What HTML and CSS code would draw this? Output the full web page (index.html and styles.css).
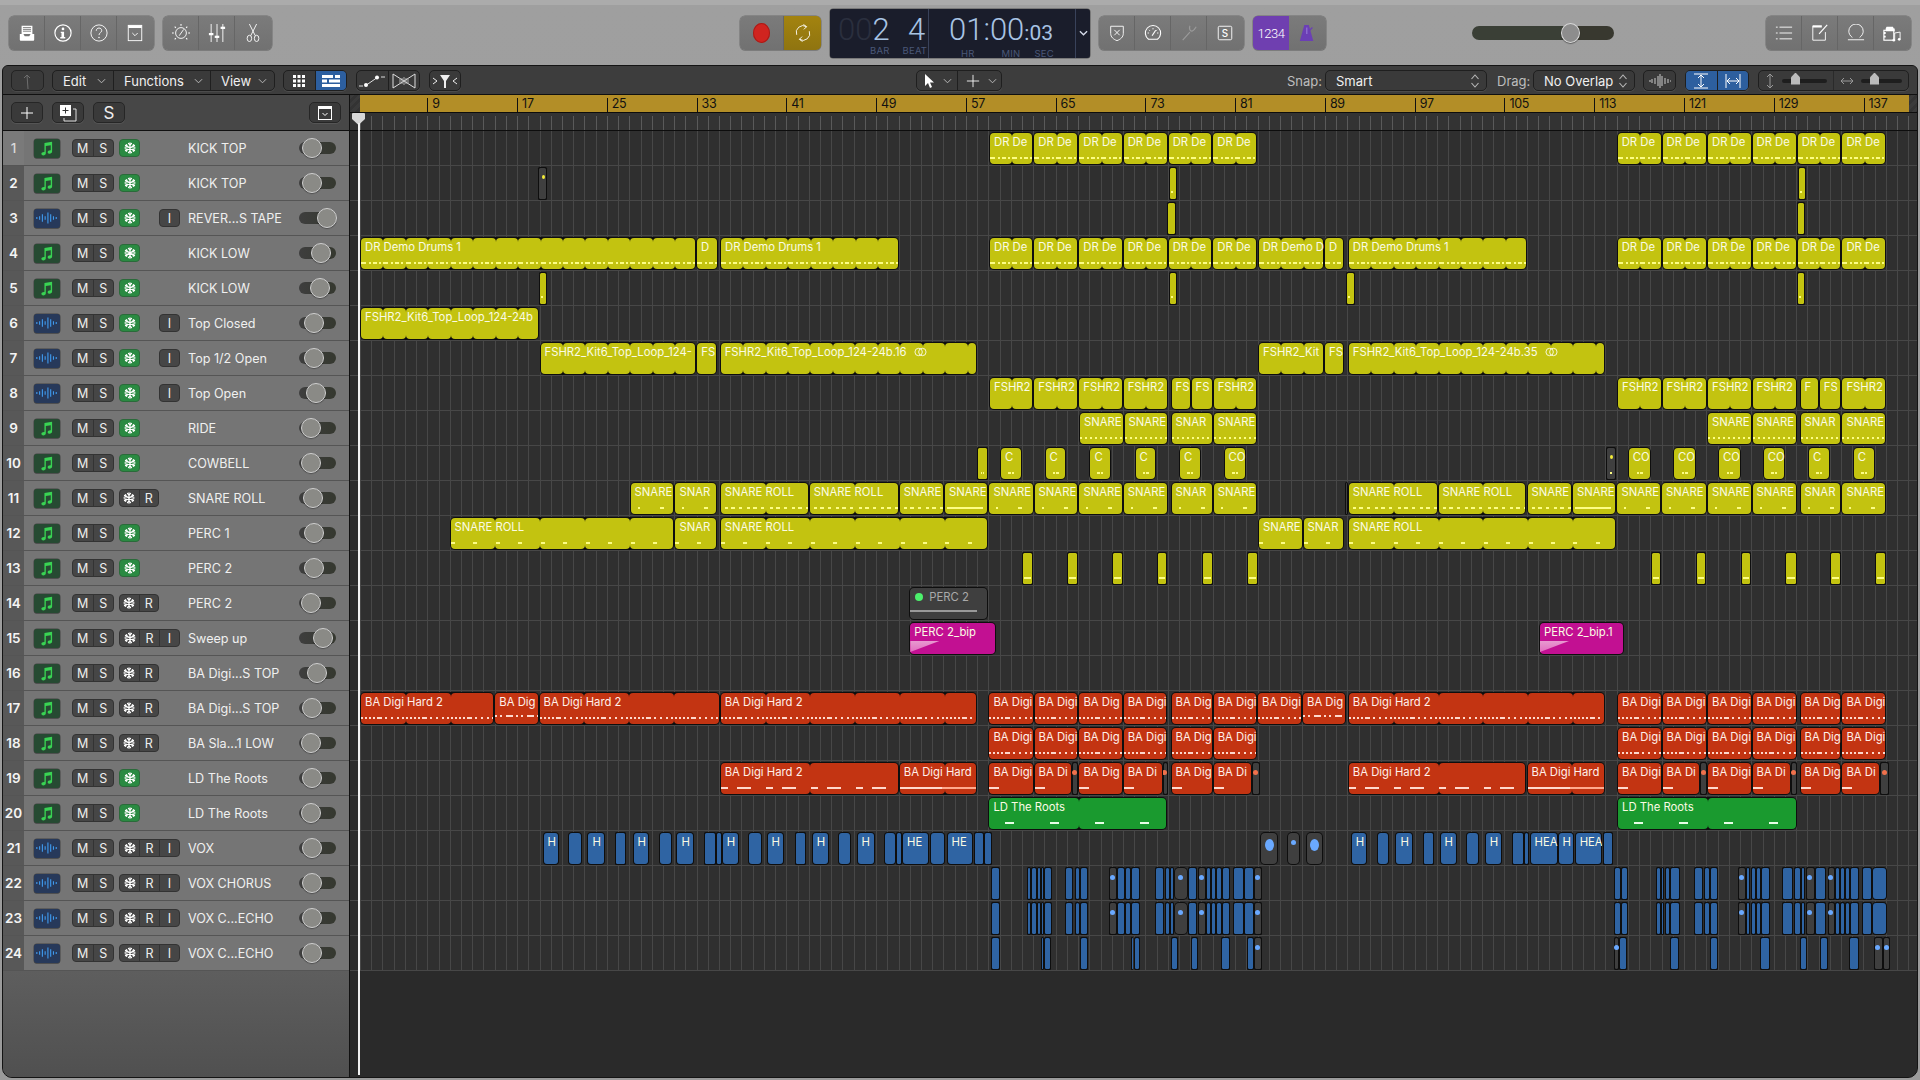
FILE: index.html
```html
<!DOCTYPE html>
<html lang="en">
<head>
<meta charset="utf-8">
<title>Logic Pro – Tracks</title>
<link rel="stylesheet" href="styles.css">
</head>
<body>
<svg class="sprite" aria-hidden="true">
  <symbol id="i-snow" viewBox="0 0 16 16"><g stroke="#fff" stroke-width="1.6" fill="none" stroke-linecap="round"><path d="M8 1v14M2 4.5l12 7M14 4.5l-12 7"/><path d="M6 2l2 2 2-2M6 14l2-2 2 2M1.5 7l2.7-.7-.7-2.7M14.500 7l-2.700-.7.7-2.700M1.500 9l2.700.7-.7 2.700M14.500 9l-2.700.7.7 2.700"/></g></symbol>
  <symbol id="i-note" viewBox="0 0 20 20"><path fill="#39d353" d="M7 3.500l9-1.500v11.500c0 1.500-1.400 2.600-3 2.600-1.300 0-2.200-.7-2.200-1.800 0-1.300 1.400-2.200 3-2.200l.6.100V6.200l-5.800 1v8.300c0 1.500-1.400 2.600-3 2.600-1.300 0-2.200-.7-2.200-1.800 0-1.300 1.400-2.200 3-2.200l.6.100z"/></symbol>
  <symbol id="i-wave" viewBox="0 0 26 14"><g stroke="#3f9bf0" stroke-width="1.200"><path d="M2 6v2M5 5v4M8 3v8M11 5v4M14 1v12M17 3v8M20 5v4M23 6v2"/></g></symbol>
  <symbol id="i-chev" viewBox="0 0 10 6"><path d="M1 1l4 4 4-4" fill="none" stroke="#b8b8b8" stroke-width="1.100"/></symbol>
  <symbol id="i-updn" viewBox="0 0 10 16"><path d="M1.500 6L5 2l3.500 4M1.500 10L5 14l3.500-4" fill="none" stroke="#b8b8b8" stroke-width="1.100"/></symbol>
</svg>

<header class="topbar">
  <div class="group g-a">
    <span class="cell"><svg class="ti" viewBox="0 0 20 20"><path fill="#fff" d="M4 2h12v9H4z"/><path stroke="#777" d="M5.500 4h9M5.500 6h9M5.500 8h9"/><path fill="#fff" d="M2 11h4l1.500 2.500h5L14 11h4v6.500a1 1 0 0 1-1 1H3a1 1 0 0 1-1-1z"/></svg></span>
    <span class="cell"><svg class="ti" viewBox="0 0 20 20"><circle cx="10" cy="10" r="9" fill="none" stroke="#fff" stroke-width="1.300"/><circle cx="10" cy="5.500" r="1.500" fill="#fff"/><path fill="#fff" d="M7.500 8.500h3.700v6h1.300V16h-5.500v-1.500h1.300v-4.500H7.500z"/></svg></span>
    <span class="cell"><svg class="ti" viewBox="0 0 20 20"><circle cx="10" cy="10" r="9" fill="none" stroke="#fff" stroke-width="1"/><path d="M7 7.500c0-1.800 1.300-3 3-3s3 1.200 3 2.800c0 2.400-3 2.400-3 5" fill="none" stroke="#fff"/><circle cx="10" cy="15" r=".8" fill="#fff"/></svg></span>
    <span class="cell"><svg class="ti" viewBox="0 0 20 20"><rect x="2.500" y="1.500" width="15" height="17" fill="none" stroke="#fff"/><path fill="#fff" d="M2.500 1.500h15v3h-15z"/><path d="M7 10l3 3 3-3" fill="none" stroke="#fff"/></svg></span>
  </div>
  <div class="group g-b">
    <span class="cell"><svg class="ti" viewBox="0 0 20 20"><circle cx="10" cy="10" r="6" fill="none" stroke="#fff"/><path d="M8 13l5-7" stroke="#fff"/><g stroke="#fff" stroke-width="1.200"><path d="M10 0v2M3 3l1.300 1.300M17 3l-1.300 1.300M0 10h2M18 10h2M3 17l1.300-1.300M17 17l-1.300-1.300"/></g></svg></span>
    <span class="cell"><svg class="ti" viewBox="0 0 20 20"><g stroke="#fff" fill="none"><path d="M3.500 0v20M10 0v20M16.500 0v20"/></g><g fill="#fff"><rect x="1" y="10" width="5" height="2.500"/><rect x="7.500" y="13" width="5" height="2.500"/><rect x="14" y="3" width="5" height="2.500"/></g></svg></span>
    <span class="cell"><svg class="ti" viewBox="0 0 20 20"><g stroke="#fff" fill="none"><path d="M6 0l6.500 13M14 0L7.500 13"/><ellipse cx="6" cy="16" rx="2.500" ry="3.500"/><ellipse cx="14" cy="16" rx="2.500" ry="3.500"/></g></svg></span>
  </div>
  <div class="group g-c">
    <span class="cell cell-rec"><i class="rec"></i></span>
    <span class="cell cell-cyc"><svg class="ti" viewBox="0 0 20 20"><g fill="none" stroke="#fff"><path d="M3 12a7.500 7.500 0 0 1 11-9"/><path d="M17 8a7.500 7.500 0 0 1-11 9"/><path d="M10.500 .5l3.500 2.500-3 3M9.500 19.500L6 17l3-3"/></g></svg></span>
  </div>
  <div class="lcd">
    <div class="lcd-pos">
      <div class="field f-bar"><div class="big"><span class="dim">00</span>2</div><span class="cap">BAR</span></div>
      <div class="field f-beat"><div class="big">4</div><span class="cap">BEAT</span></div>
    </div>
    <div class="lcd-time">
      <div class="big">01:00<small>:03</small></div>
      <div class="caps"><span class="cap">HR</span><span class="cap cap-min">MIN</span><span class="cap cap-sec">SEC</span></div>
    </div>
    <div class="lcd-more"><svg viewBox="0 0 10 6"><path d="M1 1l4 4 4-4" fill="none" stroke="#d6dcea" stroke-width="1.500"/></svg></div>
  </div>
  <div class="group g-d">
    <span class="cell"><svg class="ti" viewBox="0 0 20 20"><path d="M3 2.500h14v8c0 4-3 6.500-7 8-4-1.500-7-4-7-8z" fill="none" stroke="#fff"/><path d="M7 6.500l6 6M13 6.500l-6 6" stroke="#fff"/></svg></span>
    <span class="cell"><svg class="ti" viewBox="0 0 20 20"><path d="M5 17h10a8.500 8.500 0 1 0-10 0z" fill="none" stroke="#fff" stroke-width="1.200"/><path d="M9 13l4-6" stroke="#fff" stroke-width="1.300"/><g stroke="#fff"><path d="M4 10h1.500M5.500 6.500l1 1M10 4.500v1.500M14.500 6.500l-1 1M16 10h-1.500"/></g></svg></span>
    <span class="cell"><svg class="ti" viewBox="0 0 20 20"><g fill="none" stroke="#9a9a9a" stroke-width="1.300"><path d="M11 2c-1 3 0 6 2 6s3-2 5-5M11 9l-8 9"/></g></svg></span>
    <span class="cell"><svg class="ti" viewBox="0 0 20 20"><rect x="2.500" y="2.500" width="15" height="15" rx="1.500" fill="none" stroke="#fff"/><text x="10" y="14" class="svgt">S</text></svg></span>
  </div>
  <div class="group g-e">
    <span class="cell cell-count">1234</span>
    <span class="cell"><svg class="ti" viewBox="0 0 20 20"><path fill="#6b3fb5" d="M7 1h5l5 18H2z"/><path d="M8 12l8-8" stroke="#6b3fb5" stroke-width="1.500"/><path d="M9 4h1.500v7H9z" fill="#8f6fd0"/></svg></span>
  </div>
  <div class="volume"><i class="vol-knob"></i></div>
  <div class="group g-f">
    <span class="cell"><svg class="ti" viewBox="0 0 20 20"><g stroke="#fff"><path d="M5 3.500h14M5 10h14M5 16.500h14"/><path d="M1 3.500h2M1 10h2M1 16.500h2"/></g></svg></span>
    <span class="cell"><svg class="ti" viewBox="0 0 20 20"><path d="M16 9v9H2V2h10" fill="none" stroke="#fff"/><path fill="#fff" d="M2 2h10v2H2z"/><path d="M9 11L18 1" stroke="#fff" stroke-width="1.300"/></svg></span>
    <span class="cell"><svg class="ti" viewBox="0 0 20 20"><path d="M6 15C3 13 2 10 2 8a8 8 0 0 1 16 0c0 2-1 5-4 7" fill="none" stroke="#fff"/><path d="M1 17.500h18" stroke="#fff"/></svg></span>
    <span class="cell"><svg class="ti" viewBox="0 0 20 20"><rect x="1" y="7" width="11" height="11" fill="none" stroke="#fff" stroke-width="1.300"/><path fill="#fff" d="M4 3h7l1 2h1v3H3V5zM1 9h2v2H1zM1 13h2v2H1z"/><path d="M13 18V10l6-1v8" fill="none" stroke="#fff"/><circle cx="12" cy="18" r="1.500" fill="#fff"/><circle cx="18" cy="17" r="1.500" fill="#fff"/></svg></span>
  </div>
</header>

<main class="window">
  <nav class="tools">
    <button class="tb t-back"><svg viewBox="0 0 14 18" width="14" height="18"><path d="M7 17C7 12 6 8 6 3M3 6l3-3 3 3" fill="none" stroke="#777" stroke-width="1"/></svg></button>
    <div class="tb t-menu">
      <span class="mi mi-edit">Edit<svg class="chev"><use href="#i-chev"/></svg></span>
      <span class="mi mi-func">Functions<svg class="chev"><use href="#i-chev"/></svg></span>
      <span class="mi mi-view">View<svg class="chev"><use href="#i-chev"/></svg></span>
    </div>
    <div class="tb t-vw">
      <span class="tc"><svg viewBox="0 0 14 14" width="14" height="14"><g fill="#fff"><rect x="1" y="1" width="3" height="3"/><rect x="5.500" y="1" width="3" height="3"/><rect x="10" y="1" width="3" height="3"/><rect x="1" y="5.500" width="3" height="3"/><rect x="5.500" y="5.500" width="3" height="3"/><rect x="10" y="5.500" width="3" height="3"/><rect x="1" y="10" width="3" height="3"/><rect x="5.500" y="10" width="3" height="3"/><rect x="10" y="10" width="3" height="3"/></g></svg></span>
      <span class="tc tc-on"><svg viewBox="0 0 18 14" width="18" height="14"><g fill="#fff"><rect y="1" width="11" height="3"/><rect x="13" y="1" width="5" height="3"/><rect y="5.500" width="5" height="3"/><rect x="7" y="5.500" width="11" height="3"/><rect y="10" width="18" height="3"/></g></svg></span>
    </div>
    <div class="tb t-auto">
      <span class="tc"><svg viewBox="0 0 28 14" width="28" height="14"><path d="M1 12h4M23 3h4M7 12L20 3" stroke="#ddd" fill="none"/><circle cx="8" cy="11" r="2" fill="#fff"/><circle cx="19" cy="3.500" r="2" fill="#fff"/></svg></span>
      <span class="tc"><svg viewBox="0 0 24 16" width="24" height="16"><path d="M1 1v14M23 1v14M1 1l22 14M23 1L1 15" stroke="#ddd" fill="none"/><path d="M8 6v4M10 5v6M12 4v8M14 5v6M16 6v4" stroke="#ccc" stroke-width=".8"/></svg></span>
    </div>
    <button class="tb t-catch"><svg viewBox="0 0 26 16" width="26" height="16"><path d="M1 5l4 3-4 3M25 5l-4 3 4 3" stroke="#eee" fill="none"/><path fill="#eee" d="M8 2h10l-4 6v7h-2V8z"/></svg></button>
    <div class="tb t-tool">
      <span class="tc tool1"><svg viewBox="0 0 12 16" width="12" height="16"><path fill="#fff" d="M2 1v12l3-3 2 5 2-1-2-4.500h4z"/></svg><svg class="chev"><use href="#i-chev"/></svg></span>
      <span class="tc tool2"><svg viewBox="0 0 16 16" width="14" height="14"><path d="M8 1v14M1 8h14" stroke="#fff"/></svg><svg class="chev"><use href="#i-chev"/></svg></span>
    </div>
    <span class="tl t-snapl">Snap:</span>
    <div class="tb sel t-snap">Smart<svg class="updn"><use href="#i-updn"/></svg></div>
    <span class="tl t-dragl">Drag:</span>
    <div class="tb sel t-drag">No Overlap<svg class="updn"><use href="#i-updn"/></svg></div>
    <button class="tb t-wave"><svg viewBox="0 0 24 14" width="24" height="14"><path d="M1 7h2M4 5v4M7 4v6M10 2v10M12 0v14M14 2v10M17 4v6M20 5v4M22 7h1" stroke="#ccc"/></svg></button>
    <div class="tb t-fit">
      <span class="tc tc-on"><svg viewBox="0 0 16 16" width="16" height="16"><path d="M1 1h14M1 15h14M8 2v12M5 5l3-3 3 3M5 11l3 3 3-3" stroke="#fff" fill="none"/></svg></span>
      <span class="tc tc-on"><svg viewBox="0 0 16 16" width="16" height="16"><path d="M1 1v14M15 1v14M2 8h12M5 5L2 8l3 3M11 5l3 3-3 3" stroke="#fff" fill="none"/></svg></span>
    </div>
    <div class="tb t-zoom">
      <span class="zm"><svg viewBox="0 0 10 18" width="10" height="18"><path d="M5 2v14M2 5l3-3 3 3M2 13l3 3 3-3" stroke="#999" fill="none"/></svg><span class="zs"><i class="zt" ></i></span></span>
      <span class="zm"><svg viewBox="0 0 14 10" width="14" height="10"><path d="M1 5h12M4 2L1 5l3 3M10 2l3 3-3 3" stroke="#999" fill="none"/></svg><span class="zs"><i class="zt"></i></span></span>
    </div>
  </nav>

  <div class="body">
    <aside class="list">
      <div class="list-head">
        <button class="hb"><svg viewBox="0 0 14 14" width="14" height="14"><path d="M7 1v12M1 7h12" stroke="#fff"/></svg></button>
        <button class="hb"><svg viewBox="0 0 18 18" width="18" height="18"><path fill="#fff" d="M1 1h11v11H1z"/><path d="M6.500 3.500v6M3.500 6.500h6" stroke="#333"/><path d="M14 5h3v12H5v-3" stroke="#ddd" fill="none"/></svg></button>
        <button class="hb hb-s">S</button>
        <button class="hb hb-end"><svg viewBox="0 0 16 16" width="16" height="16"><rect x="1.500" y="1.500" width="13" height="13" fill="none" stroke="#fff"/><path fill="#fff" d="M1.500 1.500h13v2.500h-13z"/><path d="M5.500 8l2.500 2.500L10.500 8" fill="none" stroke="#fff"/></svg></button>
      </div>
      <div id="tracks"></div>
      <div class="list-rest"></div>
    </aside>
    <section class="arrange">
      <div class="ruler"><div class="ruler-gold" id="ruler"></div></div>
      <div class="subruler"></div>
      <div id="lanes"></div>
      <div class="playhead"><svg viewBox="0 0 13 12" width="13" height="12"><path fill="#d8d8d8" d="M0 1a1 1 0 0 1 1-1h11a1 1 0 0 1 1 1v5l-6.500 6L0 6z"/></svg></div>
    </section>
  </div>
</main>
<script src="app.js"></script>
</body>
</html>
```
FILE: styles.css
```css
* { box-sizing: border-box; }
html, body { margin: 0; height: 1080px; width: 1920px; overflow: hidden; }
body { background: linear-gradient(#ababab 0 5px, #9f9f9f 5px, #9b9b9b); font-family: Inter, "Liberation Sans", sans-serif; color: #eee; }
.sprite { display: none; }
button { font: inherit; color: inherit; padding: 0; margin: 0; }

/* top bar */
.topbar { height: 65px; display: flex; align-items: center; padding: 1px 0 0 9px; }
.group { display: flex; height: 34px; border-radius: 5px; background: linear-gradient(#7b7b7b, #717171); box-shadow: 0 0 0 .5px #6c6c6c, 0 1px 0 #8c8c8c; overflow: hidden; }
.cell { width: 36px; display: grid; place-items: center; border-right: 1px solid #666; }
.cell:last-child { border-right: 0; }
.ti { width: 18px; height: 18px; }
.g-a { width: 145px; }
.g-b { width: 109px; margin-left: 9px; }
.g-c { width: 81px; margin-left: 468px; }
.g-d { width: 145px; margin-left: 9px; }
.g-e { width: 73px; margin-left: 9px; }
.g-f { width: 145px; margin-left: 152px; }
.cell-rec { width: 44px; }
.rec { width: 17px; height: 20px; border-radius: 50%; background: #d0241f; box-shadow: inset 0 0 0 1px #a81c18; }
.cell-cyc { width: 37px; background: linear-gradient(#a3830f, #8f7410); border: 0; }
.cell-count { background: #6f3fb0; font-size: 13px; font-family: Roboto, sans-serif; font-weight: 300; letter-spacing: -.5px; border: 0; color: #fff; }
.lcd { width: 260px; height: 49px; margin-left: 9px; border-radius: 3px; background: #1a1d2b; display: flex; color: #a8c4e4; font-family: Roboto, sans-serif; font-weight: 300; box-shadow: 0 0 0 .5px #555; }
.big { font-size: 31px; line-height: 30px; }
.big small { font-size: 21px; font-weight: 400; }
.dim { color: #2a2f3e; }
.cap { font: 400 9.500px/12px Inter, sans-serif; color: #4a5878; letter-spacing: .2px; }
.lcd-pos { width: 99px; padding: 6.500px 0 0 8px; display: flex; gap: 13px; border-right: 1px solid #39425a; }
.field { display: flex; flex-direction: column; align-items: flex-end; }
.f-beat .cap { margin-right: -2px; }
.lcd-time { width: 147px; padding: 6.500px 0 0 20px; border-right: 1px solid #39425a; }
.caps { display: flex; padding-left: 12px; }
.cap-min { margin-left: 27px; }
.cap-sec { margin-left: 14px; }
.lcd-more { flex: 1; display: grid; place-items: center; }
.lcd-more svg { width: 9px; height: 6px; }
.volume { width: 142px; height: 14px; margin-left: 146px; border-radius: 7px; background: linear-gradient(90deg, #3a3f36 0 70%, #38382f 70%); position: relative; }
.vol-knob { position: absolute; top: -3px; left: 89px; width: 19px; height: 20px; border-radius: 50%; background: #8d8d8d; border: 1.500px solid #d8d8d8; box-shadow: 0 1px 1px #0006; }

/* window */
.window { margin: 0 2px; height: 1013px; background: #2a2a2a; border: 1px solid #141414; border-radius: 6px 6px 10px 10px; overflow: hidden; display: flex; flex-direction: column; }
.tools { height: 29px; flex: none; background: #3d3d3d; border-bottom: 1px solid #101010; display: flex; align-items: center; padding-top: 1px; font-size: 13px; color: #f0f0f0; }
.tb { height: 21px; display: flex; align-items: stretch; background: #3a3a3a; border: 1px solid #1f1f1f; border-radius: 5px; box-shadow: 0 1px 0 #4c4c4c; overflow: hidden; }
button.tb { align-items: center; justify-content: center; }
.tc { display: flex; align-items: center; justify-content: center; flex: 1; }
.tc + .tc { border-left: 1px solid #1f1f1f; }
.tc-on { background: #2d5f9f; }
.chev { width: 9px; height: 6px; }
.t-back { width: 33px; margin-left: 8px; opacity: .85; }
.t-menu { width: 223px; margin-left: 8px; }
.mi { display: flex; align-items: center; justify-content: space-between; padding: 0 7px 0 10px; }
.mi + .mi { border-left: 1px solid #1f1f1f; }
.mi-edit { width: 60px; }
.mi-func { width: 97px; }
.mi-view { flex: 1; }
.t-vw { width: 64px; margin-left: 8px; }
.t-auto { width: 64px; margin-left: 9px; }
.t-catch { width: 32px; margin-left: 9px; }
.t-tool { width: 86px; margin-left: 455px; }
.tool1 { gap: 8px; }
.tool2 { gap: 8px; padding-left: 3px; }
.tl { color: #bdbdbd; }
.t-snapl { margin-left: 285px; width: 38px; }
.sel { align-items: center; justify-content: space-between; padding: 0 6px 0 10px; }
.updn { width: 10px; height: 16px; }
.t-snap { width: 162px; }
.t-dragl { width: 36px; margin-left: 10px; }
.t-drag { width: 102px; }
.t-wave { width: 33px; margin-left: 8px; }
.t-fit { width: 64px; margin-left: 9px; }
.t-zoom { flex: 1; margin: 0 8px 0 9px; }
.zm { flex: 1; display: flex; align-items: center; gap: 7px; padding: 0 6px; }
.zm + .zm { border-left: 1px solid #2a2a2a; }
.zs { flex: 1; height: 4px; background: #1e1e1e; border-radius: 2px; position: relative; }
.zt { position: absolute; left: 9px; top: -6px; width: 9px; height: 12px; background: #bbb; clip-path: polygon(50% 0, 100% 40%, 100% 100%, 0 100%, 0 40%); }

.body { flex: 1; display: flex; min-height: 0; }
.list { width: 347px; flex: none; display: flex; flex-direction: column; border-right: 1px solid #111; background: #555; }
.list-head { height: 36px; flex: none; background: #474747; border-bottom: 1px solid #101010; display: flex; align-items: center; padding: 0 8px 0 8px; gap: 9px; }
.hb { width: 32px; height: 21px; display: grid; place-items: center; background: #3a3a3a; border: 1px solid #262626; border-radius: 5px; box-shadow: 0 1px 0 #555; }
.hb-s { font-size: 17px; }
.hb-end { margin-left: auto; }

.row { height: 35px; display: flex; align-items: center; background: #757575; border-bottom: 1px solid #555; }
.num { width: 21px; height: 100%; display: grid; place-items: center; background: #585858; font-size: 13.500px; font-weight: 600; color: #f4f4f4; flex: none; }
.row.sel-row .num { background: #7a7a7a; color: #d8d8d8; font-weight: 500; }
.kind { width: 26px; height: 19px; margin-left: 10px; border-radius: 3px; display: grid; place-items: center; flex: none; box-shadow: 0 0 0 .5px #444, 0 1px 0 #5a5a5a; }
.kind-m { background: #264a32; }
.kind-a { background: #27395a; }
.kind svg { width: 20px; height: 17px; }
.kind-a svg { width: 24px; height: 14px; }
.btns { display: flex; height: 18px; background: #464646; border: 1px solid #333; border-radius: 4px; font-size: 12.500px; color: #eee; overflow: hidden; }
.btns span { display: grid; place-items: center; flex: 1; }
.btns span + span { border-left: 1px solid #333; }
.ms { width: 42px; margin-left: 12px; flex: none; }
.slot { width: 61px; margin-left: 5px; flex: none; display: flex; justify-content: space-between; }
.fr { width: 40px; }
.fri { width: 61px; }
.green { width: 21px; background: #2a8a42; border-color: #2b6a3a; }
.solo-i { width: 21px; }
.btns svg { width: 12px; height: 12px; }
.name { width: 110px; margin-left: 8px; font-size: 12.600px; color: #f0f0f0; white-space: nowrap; flex: none; }
.toggle { width: 37px; height: 12px; margin-left: 1px; border-radius: 6px; background: linear-gradient(90deg, #3e3e3e, #35382f); position: relative; flex: none; }
.knob { position: absolute; top: -4px; width: 20px; height: 20px; border-radius: 50%; background: #8a8a86; border: 1.500px solid #cfcfcf; box-shadow: 0 1px 1px #0005; }
.list-rest { flex: 1; background: linear-gradient(#5e5e5e, #505050); }

/* arrange */
.arrange { flex: 1; position: relative; background: #2a2a2a; min-width: 0; }
.ruler { height: 18px; border-bottom: 1px solid #0d0d0d; background: repeating-linear-gradient(135deg, #3a3a3a 0 3px, #333 3px 6px); }
.ruler-gold { height: 17px; margin: 0 8px 0 10px; background: #b38e27; position: relative; }
.bar { position: absolute; top: 3px; height: 14px; padding-left: 4px; border-left: 1px solid #111; font: 400 12.500px/12px Inter, sans-serif; color: #111; letter-spacing: -.3px; }
.subruler { height: 18px; border-bottom: 1px solid #0d0d0d; background: linear-gradient(#333 0 3px, transparent 3px), repeating-linear-gradient(90deg, transparent 0 10px, #5a5a5a 10px 11px, transparent 11px 11.220px), #333; }
.lane { height: 35px; position: relative; border-bottom: 1px solid #474747; background: linear-gradient(90deg, #2b2b2b 0 9px, transparent 9px), repeating-linear-gradient(90deg, transparent 0 10px, #474747 10px 11px, transparent 11px 11.220px), #2f2f2f; }
.region { position: absolute; top: 1px; height: 33px; display: flex; padding: 1px; border-radius: 5px; background: #0e0e0e; overflow: hidden; color: #fbfbe4; font-size: 11.300px; }
.seg { flex: none; border-radius: 4px; height: 100%; background: var(--c); }
.seg-fill { flex: 1; }
.y { --c: #c3c310; }
.r { --c: #c33412; color: #fff0ea; }
.g { --c: #1a9a2f; }
.b { --c: #2f64a3; border-radius: 4px; }
.b .seg { border-radius: 3px; }
.thin, .thin .seg { border-radius: 1.500px; }
.m { --c: #c21092; }
.d { --c: #3f3f3f; }
.label { position: absolute; left: 5px; top: 3px; line-height: 14px; white-space: nowrap; display: flex; align-items: center; gap: 7px; }
.label svg { width: 13px; height: 10px; }
.d .label { color: #aaa; left: 20px; }
.dot { position: absolute; top: 8px; left: 50%; width: 5px; height: 5px; margin-left: -3px; border-radius: 50%; }
.d-y { background: #f4ec3a; width: 3px; height: 4px; margin-left: -1px; }
.d-b { background: #6aa9ff; }
.d-B { background: #6aa9ff; width: 9px; height: 12px; margin-left: -4px; top: 7px; }
.d-r { background: #f0714c; }
.d-g { background: #4cf06c; width: 8px; height: 8px; left: 6px; margin: 0; top: 6px; }
.stripe { position: absolute; left: 1px; width: 67px; top: 23px; height: 2px; background: #999; }
.fade { position: absolute; left: 1px; top: 19px; width: 29px; height: 11px; background: linear-gradient(#e79ad0, #e26cbf); clip-path: polygon(0 0, 100% 0, 0 100%); }

.notes { position: absolute; left: 1px; right: 1px; top: 25px; height: 2px; --n: #fdfd84; }
.r .notes { --n: #ffd8cc; }
.g .notes { --n: #e8ffe8; }
.n-dr { background: repeating-linear-gradient(90deg, var(--n) 0 5px, transparent 5px 8px, var(--n) 8px 10px, transparent 10px 12px, var(--n) 12px 16px, transparent 16px 18px, var(--n) 18px 20px, transparent 20px 22.440px); }
.n-dots { background: repeating-linear-gradient(90deg, var(--n) 0 2px, transparent 2px 5px); }
.n-pair { background: linear-gradient(90deg, transparent 36%, var(--n) 36% 48%, transparent 48% 54%, var(--n) 54% 66%, transparent 66%); }
.n-sn { background: repeating-linear-gradient(90deg, transparent 0 7px, var(--n) 7px 9px, transparent 9px 29px, var(--n) 29px 33px, transparent 33px 45px); }
.n-mix { background: repeating-linear-gradient(90deg, var(--n) 0 3px, transparent 3px 6px, var(--n) 6px 10px, transparent 10px 14px, var(--n) 14px 17px, transparent 17px 22.440px); left: 5px; }
.n-full { background: var(--n); left: 3px; right: 5px; }
.n-roll { background: repeating-linear-gradient(90deg, var(--n) 0 4px, transparent 4px 22.440px); }
.n-one { background: linear-gradient(90deg, transparent 14%, var(--n) 14% 86%, transparent 86%); }
.n-tick { background: var(--n); width: 2px; left: 2px; top: 24px; }
.n-ba { background: repeating-linear-gradient(90deg, var(--n) 0 2px, transparent 2px 4px, var(--n) 4px 6px, transparent 6px 8px, var(--n) 8px 10px, transparent 10px 12px, var(--n) 12px 14px, transparent 14px 16px, var(--n) 16px 21px, transparent 21px 24px, var(--n) 24px 26px, transparent 26px 30px, var(--n) 30px 32px, transparent 32px 36px, var(--n) 36px 38px, transparent 38px 41px, var(--n) 41px 43px, transparent 43px 44.900px); }
.n-ba1 { background: repeating-linear-gradient(90deg, var(--n) 0 2px, transparent 2px 5px, var(--n) 5px 7px, transparent 7px 11px, var(--n) 11px 18px, transparent 18px 21px); top: 23px; }
.n-dash { background: repeating-linear-gradient(90deg, var(--n) 0 7px, transparent 7px 16px, var(--n) 16px 30px, transparent 30px 44.900px); }
.n-first { background: var(--n); width: 10px; right: auto; }
.n-long { background: linear-gradient(90deg, var(--n) 0 55%, #ffa88c 55%); }
.n-ld { background: repeating-linear-gradient(90deg, transparent 0 16px, var(--n) 16px 25px, transparent 25px 45px); }

.playhead { position: absolute; left: 2px; top: 18px; bottom: 0; width: 13px; pointer-events: none; }
.playhead svg { display: block; }
.playhead::after { content: ""; position: absolute; left: 6px; top: 10px; bottom: 2px; width: 1.500px; background: #f2f2f2; }
.svgt { font: 500 11px Inter, sans-serif; fill: #fff; text-anchor: middle; }
```
FILE: app.js
```js
// Track list data: [name, kind (m=MIDI, a=audio), button slot, knob centre offset inside pan toggle]
const TRACKS = [
  ['KICK TOP','m','g',13],['KICK TOP','m','g',13],['REVER...S TAPE','a','gi',28],['KICK LOW','m','g',22],
  ['KICK LOW','m','g',21],['Top Closed','a','gi',15],['Top 1/2 Open','a','gi',15],['Top Open','a','gi',17],
  ['RIDE','m','g',12],['COWBELL','m','g',12],['SNARE ROLL','m','fr',14],['PERC 1','m','g',15],
  ['PERC 2','m','g',15],['PERC 2','m','fr',12],['Sweep up','m','fri',24],['BA Digi...S TOP','m','fr',18],
  ['BA Digi...S TOP','m','fr',13],['BA Sla...1 LOW','m','fr',12],['LD The Roots','m','g',13],['LD The Roots','m','g',12],
  ['VOX','a','fri',13],['VOX CHORUS','a','fri',13],['VOX C...ECHO','a','fri',13],['VOX C...ECHO','a','fri',13]
];
const snow = '<svg><use href="#i-snow"/></svg>';
function slotHtml(s) {
  if (s === 'g') return `<div class="btns green"><span>${snow}</span></div>`;
  if (s === 'gi') return `<div class="btns green"><span>${snow}</span></div><div class="btns solo-i"><span>I</span></div>`;
  if (s === 'fr') return `<div class="btns fr"><span>${snow}</span><span>R</span></div>`;
  return `<div class="btns fri"><span>${snow}</span><span>R</span><span>I</span></div>`;
}
document.getElementById('tracks').innerHTML = TRACKS.map((t, i) => `
  <div class="row${i === 0 ? ' sel-row' : ''}">
    <span class="num">${i + 1}</span>
    <span class="kind kind-${t[1]}"><svg><use href="#${t[1] === 'm' ? 'i-note' : 'i-wave'}"/></svg></span>
    <div class="btns ms"><span>M</span><span>S</span></div>
    <div class="slot">${slotHtml(t[2])}</div>
    <span class="name">${t[0]}</span>
    <div class="toggle"><i class="knob" style="left:${t[3] - 10}px"></i></div>
  </div>`).join('');

// Ruler
const ORIGIN = 360, BAR = 11.22, barX = b => 427.3 + (b - 9) * BAR;
let rul = '';
for (let b = 9; b <= 137; b += 8) rul += `<span class="bar" style="left:${(barX(b) - ORIGIN).toFixed(1)}px">${b}</span>`;
document.getElementById('ruler').innerHTML = rul;

// Regions: lanes[row] = list of {x1, x2, label, color, note, seg, dot}
const lanes = Array.from({ length: 24 }, () => []);
const add = (row, color, note, seg, items) => items.forEach(it => lanes[row - 1].push({
  x1: it[0], x2: it[1], label: it[2] || '', color: it[4] || color, note: it[3] === undefined ? note : it[3], seg: it[5] === undefined ? seg : it[5], dot: it[6]
}));
const chain = (edges, labels) => edges.slice(0, -1).map((e, i) => [e, edges[i + 1], Array.isArray(labels) ? labels[i] : labels]);
const E1 = [989, 1033.3, 1078.3, 1122.7, 1167.7, 1212.3, 1256.7];
const E2 = [1616.7, 1661.6, 1707, 1751.5, 1796.7, 1841.4, 1886];
const dark = (a, b, dot, note) => [a, b, '', note || '', 'd', 0, dot];

add(1, 'y', 'n-dr', 2, chain(E1, 'DR De').concat(chain(E2, 'DR De')));
add(2, 'y', 'n-tick', 0, [dark(538, 547, 'd-y'), [1169, 1177], [1797.5, 1805.5]]);
add(3, 'y', '', 0, [[1167, 1176], [1796.5, 1805]]);
add(4, 'y', 'n-dr', 2, [[360, 696, 'DR Demo Drums 1'], [696, 718, 'D'], [720, 898.500, 'DR Demo Drums 1']]
  .concat(chain(E1, 'DR De')).concat([[1257.7, 1324, 'DR Demo D'], [1324, 1344, 'D'], [1347.8, 1527, 'DR Demo Drums 1']]).concat(chain(E2, 'DR De')));
add(5, 'y', 'n-tick', 0, [[538.5, 546.5], [1169, 1177], [1346, 1355], [1797, 1805]]);
add(6, 'y', '', 2, [[360, 539, 'FSHR2_Kit6_Top_Loop_124-24b']]);
const LINK = '<svg viewBox="0 0 14 10"><g fill="none" stroke="#fbfbe4"><circle cx="5" cy="5" r="4"/><circle cx="9" cy="5" r="4"/></g></svg>';
add(7, 'y', '', 2, [[539.5, 696.3, 'FSHR2_Kit6_Top_Loop_124-'], [696.3, 717, 'FS', '', 0, 0], [719.7, 977, 'FSHR2_Kit6_Top_Loop_124-24b.16' + LINK],
  [1258, 1324, 'FSHR2_Kit'], [1324, 1344, 'FS', '', 0, 0], [1347.8, 1605, 'FSHR2_Kit6_Top_Loop_124-24b.35' + LINK]]);
add(8, 'y', '', 2, chain([989, 1033.3, 1078.3, 1122.7, 1167.7], 'FSHR2').concat([[1170.5, 1190.6, 'FS', '', 0, 0], [1190.6, 1212.7, 'FS', '', 0, 0], [1212.7, 1257, 'FSHR2']])
  .concat(chain([1617, 1661.6, 1707, 1751.5, 1796.7], 'FSHR2')).concat([[1799.6, 1818.8, 'F', '', 0, 0], [1818.8, 1841.4, 'FS', '', 0, 0], [1841.4, 1886, 'FSHR2']]));
add(9, 'y', 'n-dots', 0, [[1079, 1123.5, 'SNARE'], [1123.5, 1168, 'SNARE'], [1170.5, 1212.7, 'SNAR'], [1212.7, 1257, 'SNARE'], [1707, 1751.5, 'SNARE'], [1751.5, 1796.7, 'SNARE'], [1799.6, 1841.4, 'SNAR'], [1841.4, 1886, 'SNARE']]);
add(10, 'y', 'n-pair', 0, [[977, 988, ''], [1000, 1022, 'C'], [1044.6, 1066.5, 'C'], [1089.4, 1111, 'C'], [1134.5, 1156, 'C'], [1179, 1201.4, 'C'], [1223.5, 1246, 'CO'],
  dark(1605.6, 1616.4, 'd-y', 'n-pair'), [1627.7, 1650.8, 'CO'], [1673, 1695.5, 'CO'], [1718, 1740.7, 'CO'], [1762.8, 1785.4, 'CO'], [1808, 1829.6, 'C'], [1852.7, 1874.8, 'C']]);
add(11, 'y', 'n-sn', 0, [[629.6, 674.4, 'SNARE'], [674.4, 716.7, 'SNAR'], [719.7, 808.8, 'SNARE ROLL', 'n-mix', 0, 4], [808.8, 898.8, 'SNARE ROLL', 'n-mix', 0, 4], [898.8, 944, 'SNARE', 'n-mix'], [944, 988.4, 'SNARE', 'n-full'],
  [988.4, 1033.6, 'SNARE'], [1033.6, 1078.4, 'SNARE'], [1078.4, 1122.7, 'SNARE'], [1122.7, 1167.7, 'SNARE'], [1170.5, 1212.7, 'SNAR'], [1212.7, 1257, 'SNARE'],
  dark(1344.8, 1347.8, ''), [1347.8, 1437.6, 'SNARE ROLL', 'n-mix', 0, 4], [1437.6, 1526.5, 'SNARE ROLL', 'n-mix', 0, 4], [1526.5, 1572, 'SNARE', 'n-mix'], [1572, 1616.4, 'SNARE', 'n-full'],
  [1616.4, 1661, 'SNARE'], [1661, 1707, 'SNARE'], [1707, 1751.5, 'SNARE'], [1751.5, 1796.7, 'SNARE'], [1799.6, 1841.4, 'SNAR'], [1841.4, 1886, 'SNARE']]);
add(12, 'y', 'n-roll', 4, [[449.6, 674.4, 'SNARE ROLL'], [674.4, 716.7, 'SNAR', 'n-roll', 0, 0], [719.7, 988.4, 'SNARE ROLL'], [1258, 1302.6, 'SNARE', 'n-roll', 0, 0], [1302.6, 1344, 'SNAR', 'n-roll', 0, 0], [1347.8, 1616, 'SNARE ROLL']]);
add(13, 'y', 'n-one', 0, [[1021.7, 1033], [1066.7, 1078], [1111.7, 1122.7], [1156.7, 1167.3], [1201.7, 1212.7], [1246.7, 1257.7], [1650.8, 1661], [1695.5, 1706], [1740.7, 1751.5], [1785.4, 1796.7], [1829.6, 1841.4], [1874.8, 1886]]);
add(14, 'd', '', 0, [[909.3, 988.3, 'PERC 2', '', 'd', 0, 'd-g stripe-on']]);
add(15, 'm', '', 0, [[909.3, 995.7, 'PERC 2_bip', 'fade'], [1539, 1624, 'PERC 2_bip.1', 'fade']]);
const ba = ['BA Digi', 'BA Digi', 'BA Dig', 'BA Digi'];
const BA1 = [988.4, 1033.6, 1078.4, 1122.7, 1167.5];
const BAB = [1170.5, 1212.7, 1257];
const BA2 = [1617, 1661.6, 1707, 1751.5, 1796.7];
const BAC = [1799.6, 1841.4, 1886];
const baAll = chain(BA1, ba).concat(chain(BAB, ['BA Dig', 'BA Digi']));
const baEnd = chain(BA2, 'BA Digi').concat(chain(BAC, ['BA Dig', 'BA Digi']));
add(17, 'r', 'n-ba', 4, [[360, 494.3, 'BA Digi Hard 2'], [494.3, 538.6, 'BA Dig', 'n-ba1'], [538.6, 719.7, 'BA Digi Hard 2'], [719.7, 977, 'BA Digi Hard 2']]
  .concat(baAll).concat([[1257, 1302, 'BA Digi'], [1302, 1346.3, 'BA Dig', 'n-ba1'], [1347.8, 1605, 'BA Digi Hard 2']]).concat(baEnd));
add(18, 'r', 'n-ba', 4, baAll.concat(baEnd));
const dr = (a, b) => [a, b, '', '', 'd', 0, 'd-r'];
add(19, 'r', 'n-first', 0, [[719.7, 898.8, 'BA Digi Hard 2', 'n-dash', 0, 8], [898.8, 977, 'BA Digi Hard', 'n-long', 0, 4],
  [988.4, 1033.6, 'BA Digi'], [1033.6, 1072.4, 'BA Di'], dr(1072.4, 1078.4), [1078.4, 1122.7, 'BA Dig'], [1122.7, 1162.6, 'BA Di'], dr(1162.6, 1168), [1170.5, 1212.7, 'BA Dig'], [1212.7, 1252, 'BA Di'], dr(1252, 1260),
  [1347.8, 1526.5, 'BA Digi Hard 2', 'n-dash', 0, 8], [1526.5, 1605, 'BA Digi Hard', 'n-long', 0, 4],
  [1617, 1661.6, 'BA Digi'], [1661.6, 1700.4, 'BA Di'], dr(1700.4, 1707), [1707, 1751.5, 'BA Digi'], [1751.5, 1790.8, 'BA Di'], dr(1790.8, 1796.7), [1799.6, 1841.4, 'BA Dig'], [1841.4, 1880, 'BA Di'], dr(1880, 1889)]);
add(20, 'g', 'n-ld', 8, [[988.4, 1167, 'LD The Roots'], [1617, 1796.7, 'LD The Roots']]);
const blue = l => l.map(p => [p[0], p[1], p[2] || '', '']);
const bd = (a, b, d) => dark(a, b, d);
add(21, 'b', '', 0, blue([[542.6, 559.5, 'H'], [568, 582], [587.4, 604.8, 'H'], [615, 626], [632.6, 649, 'H'], [658.5, 672], [676.4, 694.3, 'H'], [704.3, 716], [716, 722], [721.7, 738.6, 'H'], [748, 761.5], [766.5, 784.4, 'H'], [795, 806], [811.7, 829, 'H'], [838, 850.5], [856.5, 875, 'H'], [884, 896], [896, 902], [902, 928.7, 'HE'], [929.7, 944.6], [946.6, 973.4, 'HE'], [974, 984.4], [984.4, 992.4],
  [1350.7, 1367.4, 'H'], [1376.7, 1389.5], [1395.4, 1412.6, 'H'], [1423.4, 1433.7], [1439.6, 1456.8, 'H'], [1466, 1479.4], [1484.8, 1502.5, 'H'], [1512.3, 1523.6], [1523.6, 1529.5], [1529.5, 1557.5, 'HEA'], [1557.5, 1573.7, 'H'], [1574.7, 1602, 'HEA'], [1602.7, 1613.5]])
  .concat([bd(1260.3, 1278, 'd-B'), bd(1287.3, 1300, 'd-b'), bd(1305.5, 1323, 'd-B')]));
const V = [[990.8, 999.8], [1026.7, 1031], [1031, 1037], [1037, 1040.6], [1040.6, 1044], [1044, 1051.5], [1064.5, 1073.4], [1075.4, 1080.4], [1080.4, 1088.4], [1116.7, 1125], [1125, 1131], [1131, 1140], [1154.7, 1164.5], [1164.5, 1169.5], [1169.5, 1174.4], [1187.6, 1197.5], [1201, 1206.3], [1206.3, 1211.2], [1211.2, 1216], [1216, 1222], [1222, 1230.4], [1233.3, 1244.1], [1244.1, 1254],
  [1614, 1621.3], [1621.3, 1627.7], [1655.7, 1660.6], [1660.6, 1664.5], [1664.5, 1670.4], [1670.4, 1679.8], [1693.5, 1703.3], [1704.3, 1709.7], [1709.7, 1717.6], [1745.6, 1750.5], [1750.5, 1756.4], [1756.4, 1761.3], [1761.3, 1769.6], [1782.4, 1793.2], [1793.7, 1800.6], [1800.6, 1805.5], [1815.3, 1825.6], [1835, 1840], [1840, 1844.8], [1844.8, 1849.7], [1849.7, 1858.6], [1861.5, 1872.3], [1872.3, 1886.6]];
const VD = [bd(1108.8, 1116.7, 'd-b'), bd(1174.4, 1187.6, 'd-b'), bd(1197.5, 1206.3, 'd-b'), bd(1254, 1261.8, 'd-b'), bd(1737.7, 1745.6, 'd-b'), bd(1805.5, 1815.3, 'd-b'), bd(1827.6, 1835, 'd-b')];
add(22, 'b', '', 0, blue(V).concat(VD));
add(23, 'b', '', 0, blue(V).concat(VD));
add(24, 'b', '', 0, blue([[990.8, 999.8], [1040.6, 1043.6], [1043.6, 1051.5], [1080.4, 1088.4], [1130.6, 1133.5], [1133.5, 1140], [1170.5, 1178.3], [1190.6, 1198.4], [1221, 1230.4], [1246.6, 1254], [1619.4, 1627.2], [1669.5, 1679.3], [1709.7, 1717.6], [1760.3, 1769.6], [1799.6, 1807.5], [1819.8, 1827.6], [1849.2, 1858.6]])
  .concat([bd(1254, 1261.8, 'd-b'), bd(1614, 1619.4, 'd-b'), bd(1874.3, 1882.6, 'd-b'), bd(1882.6, 1890.5, 'd-b')]));

const LEFT = 350;
function regionHtml(r) {
  const w = r.x2 - r.x1;
  const inner = w - 2;
  let segs = '';
  if (r.seg) {
    const step = r.seg * BAR;
    let used = 0;
    while (inner - used > step * 1.2) { segs += `<span class="seg" style="width:${step.toFixed(2)}px"></span>`; used += step; }
  }
  segs += '<span class="seg seg-fill"></span>';
  const isFade = r.note === 'fade';
  const notes = isFade ? '<i class="fade"></i>' : (r.note ? `<i class="notes ${r.note}"></i>` : '');
  const stripe = r.dot && r.dot.includes('stripe-on');
  const dot = r.dot ? `<i class="dot ${r.dot.split(' ')[0]}"></i>` : '';
  const label = r.label ? `<span class="label">${r.label}</span>` : '';
  const thin = w < 12 ? ' thin' : '';
  return `<div class="region ${r.color}${thin}" style="left:${(r.x1 - LEFT).toFixed(1)}px;width:${w.toFixed(1)}px">${segs}${notes}${dot}${stripe ? '<i class="stripe"></i>' : ''}${label}</div>`;
}
document.getElementById('lanes').innerHTML = lanes.map(l => `<div class="lane">${l.map(regionHtml).join('')}</div>`).join('');
```
